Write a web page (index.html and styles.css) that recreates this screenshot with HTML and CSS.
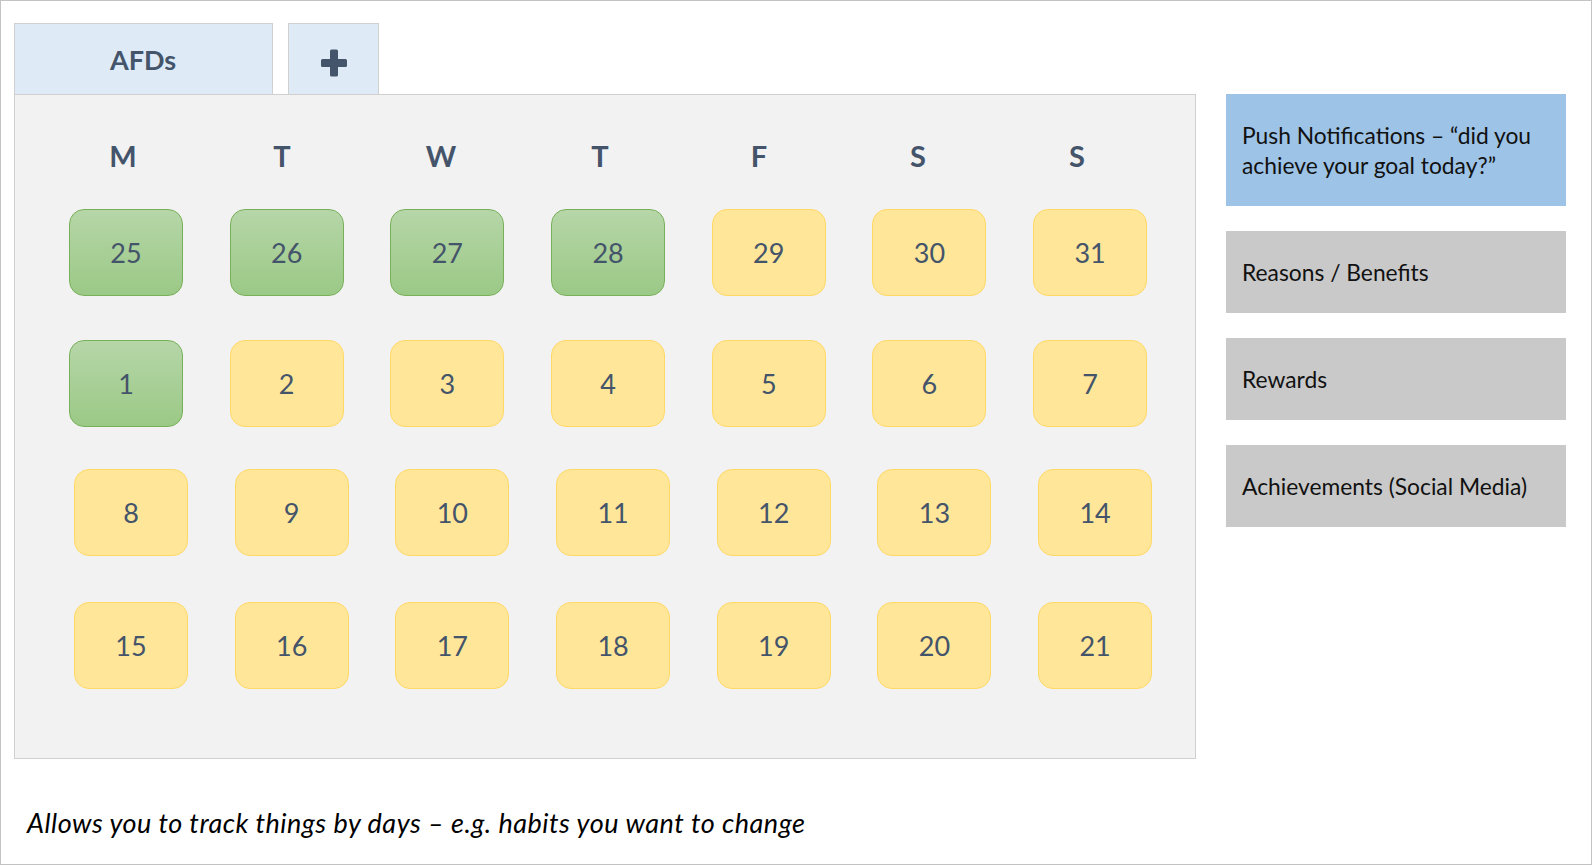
FILE: index.html
```html
<!DOCTYPE html>
<html lang="en">
<head>
<meta charset="utf-8">
<title>AFDs tracker</title>
<link rel="stylesheet" href="styles.css">
</head>
<body>
<div class="page">
  <div class="top">
    <div class="main">
      <div class="tabs">
        <div class="tab tab-name">AFDs</div>
        <div class="tab tab-add">
          <svg class="plus" viewBox="0 0 26 28" width="26" height="28" aria-hidden="true">
            <rect x="9" y="0.5" width="8" height="27" rx="1.5"/>
            <rect x="0" y="10" width="26" height="8" rx="1.5"/>
          </svg>
        </div>
      </div>
      <div class="panel">
        <div class="days">
          <span>M</span><span>T</span><span>W</span><span>T</span><span>F</span><span>S</span><span>S</span>
        </div>
        <div class="weeks">
          <div class="week">
            <div class="cell done">25</div>
            <div class="cell done">26</div>
            <div class="cell done">27</div>
            <div class="cell done">28</div>
            <div class="cell">29</div>
            <div class="cell">30</div>
            <div class="cell">31</div>
          </div>
          <div class="week">
            <div class="cell done">1</div>
            <div class="cell">2</div>
            <div class="cell">3</div>
            <div class="cell">4</div>
            <div class="cell">5</div>
            <div class="cell">6</div>
            <div class="cell">7</div>
          </div>
          <div class="week week-shift week-tight">
            <div class="cell">8</div>
            <div class="cell">9</div>
            <div class="cell">10</div>
            <div class="cell">11</div>
            <div class="cell">12</div>
            <div class="cell">13</div>
            <div class="cell">14</div>
          </div>
          <div class="week week-shift week-loose">
            <div class="cell">15</div>
            <div class="cell">16</div>
            <div class="cell">17</div>
            <div class="cell">18</div>
            <div class="cell">19</div>
            <div class="cell">20</div>
            <div class="cell">21</div>
          </div>
        </div>
      </div>
    </div>
    <div class="side">
      <div class="box box-blue box-tall">Push Notifications – “did you achieve your goal today?”</div>
      <div class="box">Reasons / Benefits</div>
      <div class="box">Rewards</div>
      <div class="box">Achievements (Social Media)</div>
    </div>
  </div>
  <p class="caption">Allows you to track things by days – e.g. habits you want to change</p>
</div>
</body>
</html>
```

FILE: styles.css
```css
* {
  box-sizing: border-box;
}

html, body {
  margin: 0;
  padding: 0;
  background: #ffffff;
}

body {
  font-family: Lato, "Open Sans", "Liberation Sans", sans-serif;
  color: #44546a;
}

.page {
  width: 1592px;
  height: 865px;
  border: 1px solid #c3c3c3;
  padding: 22px 0 0 13px;
  display: flex;
  flex-direction: column;
}

.top {
  display: flex;
  align-items: flex-start;
}

.main {
  width: 1182px;
  display: flex;
  flex-direction: column;
}

.tabs {
  display: flex;
  gap: 15px;
  height: 71px;
}

.tab {
  height: 71px;
  background: #deebf7;
  border: 1px solid #d0d0d0;
  border-bottom: none;
  display: flex;
  align-items: center;
  justify-content: center;
}

.tab-name {
  width: 259px;
  font-size: 27px;
  font-weight: 700;
  padding-right: 1px;
}

.tab-add {
  width: 91px;
  padding-top: 7px;
}

.plus {
  display: block;
  fill: #44546a;
}

.panel {
  height: 665px;
  background: #f2f2f2;
  border: 1px solid #d0d0d0;
  padding-top: 43px;
}

.days {
  display: grid;
  grid-template-columns: repeat(7, 159px);
  padding-left: 28.5px;
  font-size: 29px;
  font-weight: 700;
  line-height: 35px;
  text-align: center;
}

.weeks {
  margin-top: 36px;
  display: flex;
  flex-direction: column;
  gap: 44px;
}

.week {
  display: flex;
  gap: 46.7px;
  padding-left: 54px;
}

.week-shift {
  padding-left: 59px;
}

.week-tight {
  margin-top: -2px;
}

.week-loose {
  margin-top: 2px;
}

.cell {
  width: 114px;
  height: 87px;
  border-radius: 15px;
  background: #ffe699;
  border: 1px solid #ffd966;
  display: flex;
  align-items: center;
  justify-content: center;
  font-size: 27px;
  color: #44546a;
}

.cell.done {
  background: linear-gradient(to bottom, #b6d6a8, #9bc986);
  border-color: #77b058;
}

.side {
  margin-left: 30px;
  padding-top: 71px;
  width: 340px;
  display: flex;
  flex-direction: column;
  gap: 25px;
}

.box {
  height: 82px;
  background: #c9c9c9;
  color: #111111;
  font-size: 22.8px;
  line-height: 30px;
  padding: 0 16px;
  display: flex;
  align-items: center;
}

.box-blue {
  background: #9dc3e6;
}

.box-tall {
  height: 112px;
}

.caption {
  margin: 47px 0 0 13px;
  font-size: 27px;
  letter-spacing: 0.5px;
  font-style: italic;
  color: #000000;
}
```
